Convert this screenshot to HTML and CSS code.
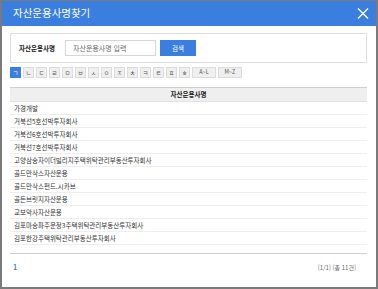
FILE: index.html
```html
<!DOCTYPE html>
<html lang="ko">
<head>
    <meta charset="UTF-8">
    <meta name="viewport" content="width=device-width, initial-scale=1.0">
    <title>자산운용사명찾기</title>
    <link rel="stylesheet" href="styles.css">
</head>
<body>
    <div class="popup">
        <div class="popup-header">
            <div class="popup-title">자산운용사명찾기</div>
            <button class="close-btn" aria-label="닫기">
                <svg width="12" height="11" viewBox="0 0 12 11">
                    <path d="M1 0.5 L11 10.5 M11 0.5 L1 10.5" stroke="#fff" stroke-width="1.4" fill="none"/>
                </svg>
            </button>
        </div>

        <div class="popup-body">
            <div class="search-box">
                <span class="search-label">자산운용사명</span>
                <input class="search-input" type="text" placeholder="자산운용사명 입력">
                <button class="search-btn">검색</button>
            </div>

            <div class="tabs">
                <span class="tab active">ㄱ</span>
                <span class="tab">ㄴ</span>
                <span class="tab">ㄷ</span>
                <span class="tab">ㄹ</span>
                <span class="tab">ㅁ</span>
                <span class="tab">ㅂ</span>
                <span class="tab">ㅅ</span>
                <span class="tab">ㅇ</span>
                <span class="tab">ㅈ</span>
                <span class="tab">ㅊ</span>
                <span class="tab">ㅋ</span>
                <span class="tab">ㅌ</span>
                <span class="tab">ㅍ</span>
                <span class="tab">ㅎ</span>
                <span class="tab wide">A~L</span>
                <span class="tab wide">M~Z</span>
            </div>

            <div class="result-table">
                <div class="table-head">자산운용사명</div>
                <div class="table-row">가경개발</div>
                <div class="table-row">거북선5호선박투자회사</div>
                <div class="table-row">거북선6호선박투자회사</div>
                <div class="table-row">거북선7호선박투자회사</div>
                <div class="table-row">고양삼송자이더빌리지주택위탁관리부동산투자회사</div>
                <div class="table-row">골드만삭스자산운용</div>
                <div class="table-row">골드만삭스펀드.시카브</div>
                <div class="table-row">골든브릿지자산운용</div>
                <div class="table-row">교보악사자산운용</div>
                <div class="table-row">김포마송파주운정3주택위탁관리부동산투자회사</div>
                <div class="table-row">김포한강주택위탁관리부동산투자회사</div>
            </div>

            <div class="paging">
                <span class="page-num">1</span>
                <span class="page-info">[1/1] [총 11건]</span>
            </div>
        </div>
    </div>
</body>
</html>
```

FILE: styles.css
```css
body {
    margin: 0;
    font-family: "Noto Sans CJK KR", "Noto Sans", sans-serif;
    color: #333;
    background: #fff;
}

.popup {
    width: 378px;
    height: 289px;
    box-sizing: border-box;
    border: 2px solid #7a7a7a;
    border-top-width: 1px;
    background: #fff;
    overflow: hidden;
}

.popup-header {
    height: 25px;
    background: #3a7fe0;
    display: flex;
    align-items: center;
    justify-content: space-between;
    padding: 0 7px 0 11px;
}

.popup-title {
    color: #fff;
    font-size: 10.5px;
    line-height: 1;
}

.close-btn {
    border: none;
    background: none;
    padding: 0;
    display: flex;
}

.popup-body {
    padding: 7px 9px 0 8px;
}

.search-box {
    height: 30px;
    box-sizing: border-box;
    border: 1px solid #dedede;
    display: flex;
    align-items: center;
    padding: 0 8px;
}

.search-label {
    font-size: 6.5px;
    font-weight: bold;
    color: #222;
    width: 46px;
}

.search-input {
    width: 91px;
    height: 16px;
    box-sizing: border-box;
    border: 1px solid #d6d6d6;
    padding: 0 7px;
    font-family: inherit;
    font-size: 7px;
    outline: none;
}

.search-input::placeholder {
    color: #666;
}

.search-btn {
    margin-left: 4px;
    width: 36px;
    height: 16px;
    border: none;
    background: #3a7fe0;
    color: #fff;
    font-family: inherit;
    font-size: 6.5px;
    padding: 0;
}

.tabs {
    display: flex;
    gap: 2px;
    margin-top: 4px;
}

.tab {
    width: 11px;
    height: 11px;
    box-sizing: border-box;
    border: 1px solid #dcdcdc;
    background: #efefef;
    color: #555;
    font-size: 6px;
    line-height: 9px;
    text-align: center;
}

.tab.active {
    background: #3a7fe0;
    border-color: #3a7fe0;
    color: #fff;
}

.tab.wide {
    width: 24px;
    font-size: 5.5px;
}

.result-table {
    margin-top: 9px;
}

.table-head {
    height: 15px;
    box-sizing: border-box;
    border-top: 1px solid #cfcfcf;
    border-bottom: 1px solid #e2e2e2;
    background: #efefef;
    font-size: 6.5px;
    font-weight: bold;
    line-height: 13px;
    text-align: center;
    color: #222;
}

.table-row {
    height: 13px;
    box-sizing: border-box;
    border-bottom: 1px solid #eeeeee;
    padding-left: 4px;
    font-size: 6.5px;
    line-height: 12px;
    color: #333;
}

.paging {
    margin-top: 8px;
    border-top: 1px solid #d0d0d0;
    display: flex;
    justify-content: space-between;
    align-items: center;
    padding: 8px 11px 0 3px;
}

.page-num {
    color: #2f8ae8;
    font-size: 7px;
    font-weight: bold;
}

.page-info {
    color: #666;
    font-size: 6px;
}
```
